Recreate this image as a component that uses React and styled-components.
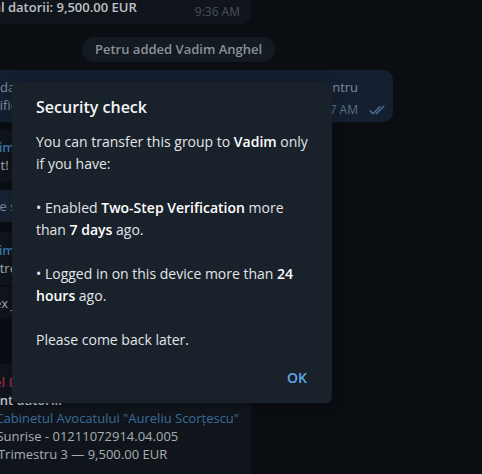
import React from "react";
import styled, { createGlobalStyle } from "styled-components";

const GlobalStyle = createGlobalStyle`
  html, body { margin: 0; padding: 0; background: #0a0d12; }
  body { font-family: "Open Sans", "Noto Sans", sans-serif; }
  * { box-sizing: border-box; }
`;

const Screen = styled.div`
  position: relative;
  width: 482px;
  height: 474px;
  overflow: hidden;
  background: #0a0d12;
  font-family: "Open Sans", "Noto Sans", sans-serif;
  font-size: 13px;
`;

const Chat = styled.div`
  display: flex;
  flex-direction: column;
  align-items: flex-start;
  margin-top: -28px;
`;

const bubbleBg = { in: "#10151b", out: "#142031", accent: "#172333" };
const textColor = { in: "#a9aeb4", out: "#7f8d9c", accent: "#7b8999" };

const Bubble = styled.div`
  display: flex;
  align-items: flex-end;
  flex-shrink: 0;
  width: ${(p) => p.$width}px;
  margin-left: ${(p) => p.$left}px;
  margin-top: ${(p) => p.$gap}px;
  padding: ${(p) => p.$pad};
  background: ${(p) => bubbleBg[p.$tone]};
  border-radius: 10px;
`;

const Body = styled.div`
  flex: 1;
  min-width: 0;
  margin-bottom: ${(p) => p.$mb}px;
  line-height: 18px;
  color: ${(p) => textColor[p.$tone]};
  white-space: nowrap;
`;

const Line = styled.div`
  margin-left: ${(p) => p.$shift || 0}px;
`;

const Name = styled.div`
  margin-left: ${(p) => p.$shift || 0}px;
  font-weight: 600;
  color: ${(p) => p.$color};
`;

const Strong = styled.span`
  font-weight: 600;
  color: #bec2c7;
`;

const Link = styled.span`
  color: #3c6c9d;
`;

const Meta = styled.div`
  display: flex;
  align-items: center;
  gap: 11px;
  flex-shrink: 0;
  margin-left: 12px;
  font-size: 12px;
  line-height: 16px;
  color: ${(p) => (p.$tone === "out" ? "#5b6f85" : "#4a5159")};
`;

const ServicePill = styled.div`
  margin: 13px 0 0 82px;
  height: 25px;
  padding: 0 13px;
  border-radius: 13px;
  background: #141a21;
  color: #8a9199;
  font-weight: 600;
  font-size: 13px;
  line-height: 25px;
  white-space: nowrap;
`;

const Overlay = styled.div`
  position: absolute;
  inset: 0;
  display: flex;
  align-items: center;
  padding: 11px 0 0 12px;
`;

const Dialog = styled.div`
  width: 320px;
  display: flex;
  flex-direction: column;
  padding: 14px 0 8px;
  background: #19212b;
  border-radius: 6px;
  box-shadow: 0 2px 14px rgba(0, 0, 0, 0.25);
`;

const Title = styled.div`
  padding: 0 24px;
  margin-bottom: 13px;
  font-size: 16px;
  font-weight: 600;
  line-height: 22px;
  color: #f3f5f7;
`;

const Text = styled.p`
  margin: 0;
  padding: 0 24px;
  font-size: 14px;
  line-height: 22px;
  color: #e2e5e8;
`;

const B = styled.b`
  font-weight: 600;
  color: #ffffff;
`;

const Actions = styled.div`
  display: flex;
  justify-content: flex-end;
  margin-top: 8px;
  padding: 0 12px;
`;

const Button = styled.button`
  height: 36px;
  padding: 0 13px;
  border: none;
  border-radius: 4px;
  background: transparent;
  color: #5eabe6;
  font-family: inherit;
  font-size: 14px;
  font-weight: 600;
  cursor: pointer;
`;

const DoubleCheck = () => (
  <svg width="17" height="11" viewBox="0 0 17 11" fill="none">
    <path
      d="M1 5.8l3 3L11 1.6M7.4 8.6L14.8 1.2"
      stroke="#4a6c8f"
      strokeWidth="1.5"
      strokeLinecap="round"
      strokeLinejoin="round"
    />
  </svg>
);

export default function App() {
  return (
    <>
      <GlobalStyle />
      <Screen>
        <Chat>
          <Bubble $tone="in" $left={-37} $width={288} $gap={0} $pad="8px 11px 4px 10px">
            <Body $tone="in" $mb={4}>
              <Line>Trimestru 3 — 9,500.00 EUR</Line>
              <Line>
                <Strong>Total datorii: 9,500.00 EUR</Strong>
              </Line>
            </Body>
            <Meta $tone="in">9:36 AM</Meta>
          </Bubble>

          <ServicePill>Petru added Vadim Anghel</ServicePill>

          <Bubble $tone="out" $left={-102} $width={495} $gap={8} $pad="8px 7px 4px 10px">
            <Body $tone="out" $mb={4}>
              <Line>Bună, vă trimit datele de facturare și rechizitele complete ale firmei pentru</Line>
              <Line>Vă rog să le verificați și confirmați.</Line>
            </Body>
            <Meta $tone="out">
              <span>9:37 AM</span>
              <DoubleCheck />
            </Meta>
          </Bubble>

          <Bubble $tone="in" $left={-35} $width={280} $gap={8} $pad="8px 11px 4px 10px">
            <Body $tone="in" $mb={4}>
              <Name $color="#3a75ad">Vadim Anghel</Name>
              <Line>Salut! Am primit actul, mulțumesc.</Line>
            </Body>
            <Meta $tone="in">9:41 AM</Meta>
          </Bubble>

          <Bubble $tone="accent" $left={-36} $width={250} $gap={8} $pad="7px 10px 7px 10px">
            <Body $tone="accent" $mb={0}>
              <Line>Unde se semnează contractul?</Line>
            </Body>
          </Bubble>

          <Bubble $tone="in" $left={-35} $width={280} $gap={10} $pad="9px 11px 4px 10px">
            <Body $tone="in" $mb={4}>
              <Name $color="#3a75ad">Vadim Anghel</Name>
              <Line $shift={1}>Ok, trebuie să semnez și anexa?</Line>
            </Body>
            <Meta $tone="in">9:42 AM</Meta>
          </Bubble>

          <Bubble $tone="in" $left={-40} $width={280} $gap={2} $pad="7px 11px 4px 10px">
            <Body $tone="in" $mb={2}>
              <Line>Codex Juridic SRL — actul semnat.</Line>
            </Body>
            <Meta $tone="in">9:42 AM</Meta>
          </Bubble>

          <Bubble $tone="in" $left={-47} $width={298} $gap={46} $pad="9px 11px 24px 10px">
            <Body $tone="in" $mb={0}>
              <Name $color="#9a2949" $shift={2}>Daniel Ene</Name>
              <Line $shift={2}><Strong>Restant datorii:</Strong></Line>
              <Line $shift={-5}>De la: <Link>Cabinetul Avocatului "Aureliu Scorțescu"</Link></Line>
              <Line $shift={-2}>Cont: Sunrise - 01211072914.04.005</Line>
              <Line $shift={-2}>Total: Trimestru 3 — 9,500.00 EUR</Line>
            </Body>
          </Bubble>
        </Chat>

        <Overlay>
          <Dialog role="dialog">
            <Title>Security check</Title>
            <Text>
              You can transfer this group to <B>Vadim</B> only if you have:
              <br />
              <br />
              • Enabled <B>Two-Step Verification</B> more than <B>7 days</B> ago.
              <br />
              <br />
              • Logged in on this device more than <B>24 hours</B> ago.
              <br />
              <br />
              Please come back later.
            </Text>
            <Actions>
              <Button>OK</Button>
            </Actions>
          </Dialog>
        </Overlay>
      </Screen>
    </>
  );
}
